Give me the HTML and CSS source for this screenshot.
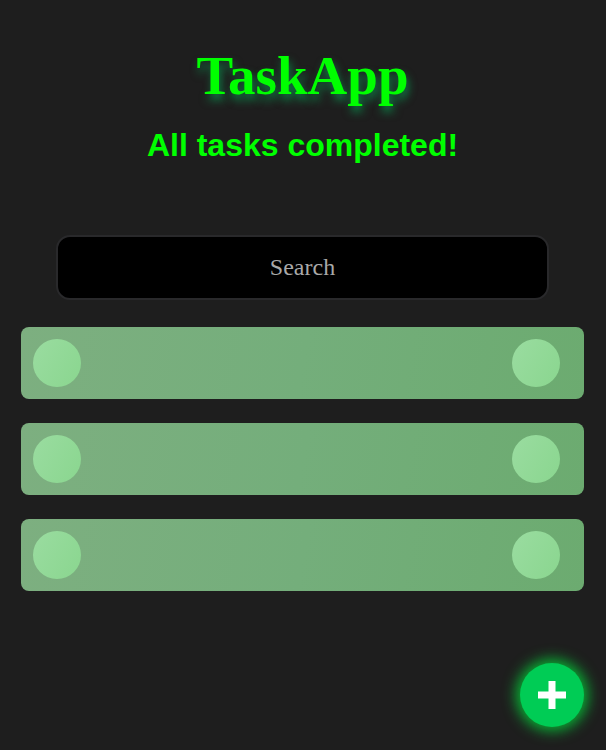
FILE: index.html
```html
<!DOCTYPE html>
<html>
<head>
<meta charset="utf-8">
<link rel="stylesheet" href="styles.css">
</head>
<body>
<div class="app">
  <header class="header">
    <h1 class="title">TaskApp</h1>
    <h2 class="status">All tasks completed!</h2>
  </header>
  <div class="search-wrap">
    <input class="search" type="text" placeholder="Search">
  </div>
  <ul class="tasks">
    <li class="task"><span class="dot"></span><span class="dot"></span></li>
    <li class="task"><span class="dot"></span><span class="dot"></span></li>
    <li class="task"><span class="dot"></span><span class="dot"></span></li>
  </ul>
</div>
<button class="fab" aria-label="Add task">
  <svg width="28" height="28" viewBox="0 0 28 28"><rect x="0" y="10.5" width="28" height="7" fill="#fff"/><rect x="10.5" y="0" width="7" height="28" fill="#fff"/></svg>
</button>
</body>
</html>
```
FILE: styles.css
```css
html, body {
  margin: 0;
  padding: 0;
  background: #1e1e1e;
  height: 100%;
}
.app {
  padding: 0 22px 0 21px;
}
.header {
  display: flex;
  flex-direction: column;
  align-items: center;
  padding-top: 44px;
}
.title {
  margin: 0;
  font-family: "Liberation Serif", serif;
  font-weight: bold;
  font-size: 55px;
  line-height: 64px;
  color: #00ff00;
  text-shadow: 2px 6px 8px rgba(0, 200, 100, 0.55);
}
.status {
  margin: 19px 0 0;
  font-family: "Liberation Sans", Arial, sans-serif;
  font-weight: bold;
  font-size: 32px;
  line-height: 37px;
  color: #00ff00;
}
.search-wrap {
  display: flex;
  justify-content: center;
  margin-top: 71px;
}
.search {
  box-sizing: border-box;
  width: 493px;
  height: 65px;
  background: #000;
  border: 2px solid #29292b;
  border-radius: 14px;
  font-family: "Liberation Serif", serif;
  font-size: 24px;
  text-align: center;
  color: #ccc;
  outline: none;
}
.search::placeholder {
  color: #a9a9a9;
}
.tasks {
  list-style: none;
  margin: 27px 0 0;
  padding: 0;
  display: flex;
  flex-direction: column;
  gap: 24px;
}
.task {
  box-sizing: border-box;
  height: 72px;
  padding: 12px 24px 12px 12px;
  border-radius: 8px;
  background: linear-gradient(100deg, #7daf80 0%, #74ae7b 50%, #6cab70 100%);
  display: flex;
  justify-content: space-between;
  align-items: center;
}
.dot {
  width: 48px;
  height: 48px;
  border-radius: 50%;
  background: linear-gradient(120deg, #9adca0 0%, #8ad68f 100%);
}
.fab {
  position: fixed;
  left: 520px;
  top: 663px;
  width: 64px;
  height: 64px;
  border: none;
  border-radius: 50%;
  background: #00cc55;
  box-shadow: 0 0 14px 4px rgba(0, 230, 60, 0.75);
  display: flex;
  align-items: center;
  justify-content: center;
  padding: 0;
}
```
